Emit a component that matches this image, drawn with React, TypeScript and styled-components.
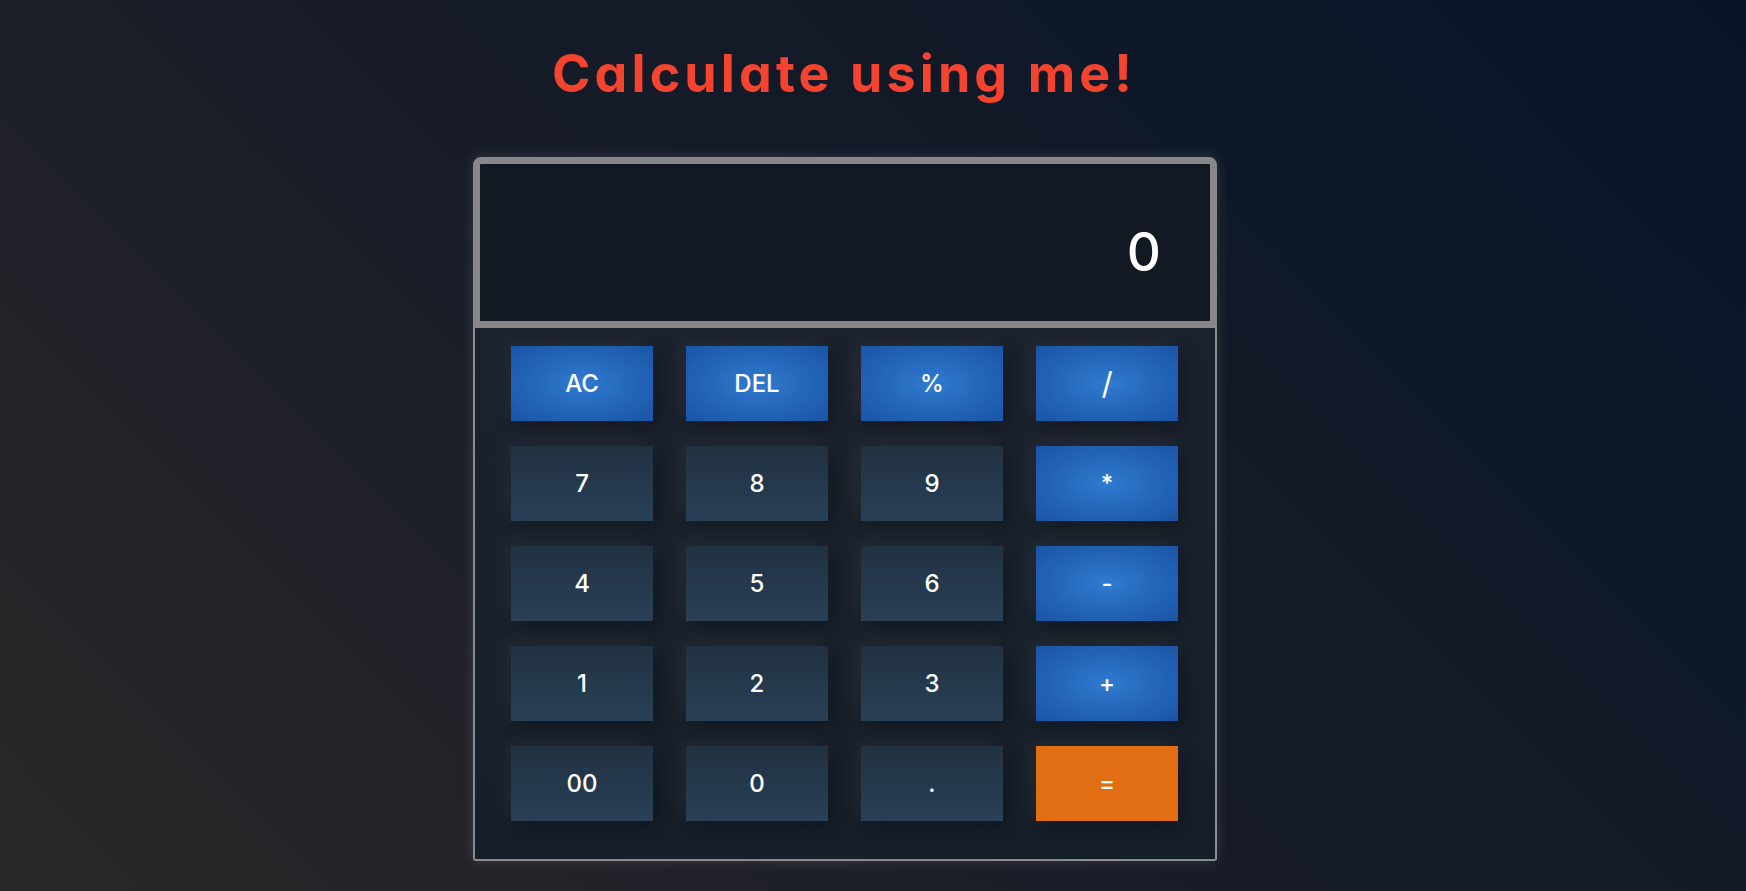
import React from "react";
import styled, { createGlobalStyle } from "styled-components";

const GlobalStyle = createGlobalStyle`
  html, body {
    margin: 0;
    padding: 0;
    height: 100%;
  }
  body {
    background: linear-gradient(45deg, #2b2829 0%, #161b27 50%, #081529 100%);
    background-attachment: fixed;
    font-family: "Inter", "Open Sans", sans-serif;
    font-feature-settings: "cv11" 1;
  }
  #root {
    min-height: 100vh;
  }
`;

const Page = styled.main`
  min-height: 891px;
  box-sizing: border-box;
  display: flex;
  flex-direction: column;
  align-items: flex-start;
  padding: 43px 0 0 473px;
`;

const Title = styled.h1`
  margin: 0 0 52px 79px;
  font-family: "Inter", "Open Sans", sans-serif;
  font-feature-settings: "cv11" 1;
  font-size: 52px;
  line-height: 62px;
  font-weight: 700;
  letter-spacing: 4.1px;
  color: #f4432f;
`;

const Calculator = styled.section`
  width: 744px;
  display: flex;
  flex-direction: column;
  border-radius: 8px 8px 3px 3px;
  box-shadow: 0 0 14px rgba(200, 205, 215, 0.16);
`;

const Display = styled.div`
  height: 171px;
  box-sizing: border-box;
  border: 7px solid #87878b;
  border-radius: 8px 8px 0 0;
  background: #121923;
  display: flex;
  justify-content: flex-end;
  align-items: flex-end;
  padding: 0 49px 38px 0;
  color: #ffffff;
  font-size: 53px;
  line-height: 62px;
  font-weight: 500;
`;

const Keypad = styled.div`
  box-sizing: border-box;
  border: 2px solid #8b8b90;
  border-top: none;
  border-radius: 0 0 3px 3px;
  background: linear-gradient(180deg, #1b222d 0%, #19212c 60%, #161e2a 100%);
  padding: 18px 37px 38px 36px;
  display: grid;
  grid-template-columns: repeat(4, 142px);
  grid-auto-rows: 75px;
  column-gap: 33px;
  row-gap: 25px;
`;

type Variant = "op" | "num" | "eq";

const Key = styled.button<{ $variant: Variant; $tall?: boolean }>`
  border: none;
  margin: 0;
  padding: 0;
  cursor: pointer;
  color: #ffffff;
  font-family: "Inter", "Open Sans", sans-serif;
  font-size: ${({ $tall }) => ($tall ? "31px" : "24px")};
  font-weight: ${({ $tall }) => ($tall ? 400 : 500)};
  display: flex;
  align-items: center;
  justify-content: center;
  box-shadow: -6px -6px 18px rgba(255, 255, 255, 0.05),
    6px 6px 16px rgba(0, 0, 0, 0.28);
  background: ${({ $variant }) =>
    $variant === "op"
      ? "radial-gradient(ellipse at center, #2f7bd0 0%, #2466b9 50%, #1a54a6 100%)"
      : $variant === "eq"
      ? "#e16e12"
      : "linear-gradient(180deg, #213141 0%, #263a4f 60%, #2a4056 100%)"};
`;

const keys: { label: string; variant: Variant }[] = [
  { label: "AC", variant: "op" },
  { label: "DEL", variant: "op" },
  { label: "%", variant: "op" },
  { label: "/", variant: "op" },
  { label: "7", variant: "num" },
  { label: "8", variant: "num" },
  { label: "9", variant: "num" },
  { label: "*", variant: "op" },
  { label: "4", variant: "num" },
  { label: "5", variant: "num" },
  { label: "6", variant: "num" },
  { label: "-", variant: "op" },
  { label: "1", variant: "num" },
  { label: "2", variant: "num" },
  { label: "3", variant: "num" },
  { label: "+", variant: "op" },
  { label: "00", variant: "num" },
  { label: "0", variant: "num" },
  { label: ".", variant: "num" },
  { label: "=", variant: "eq" },
];

export default function App() {
  return (
    <>
      <GlobalStyle />
      <Page>
        <Title>Calculate using me!</Title>
        <Calculator>
          <Display>0</Display>
          <Keypad>
            {keys.map((k) => (
              <Key key={k.label} $variant={k.variant} $tall={k.label === "/"}>
                {k.label}
              </Key>
            ))}
          </Keypad>
        </Calculator>
      </Page>
    </>
  );
}
